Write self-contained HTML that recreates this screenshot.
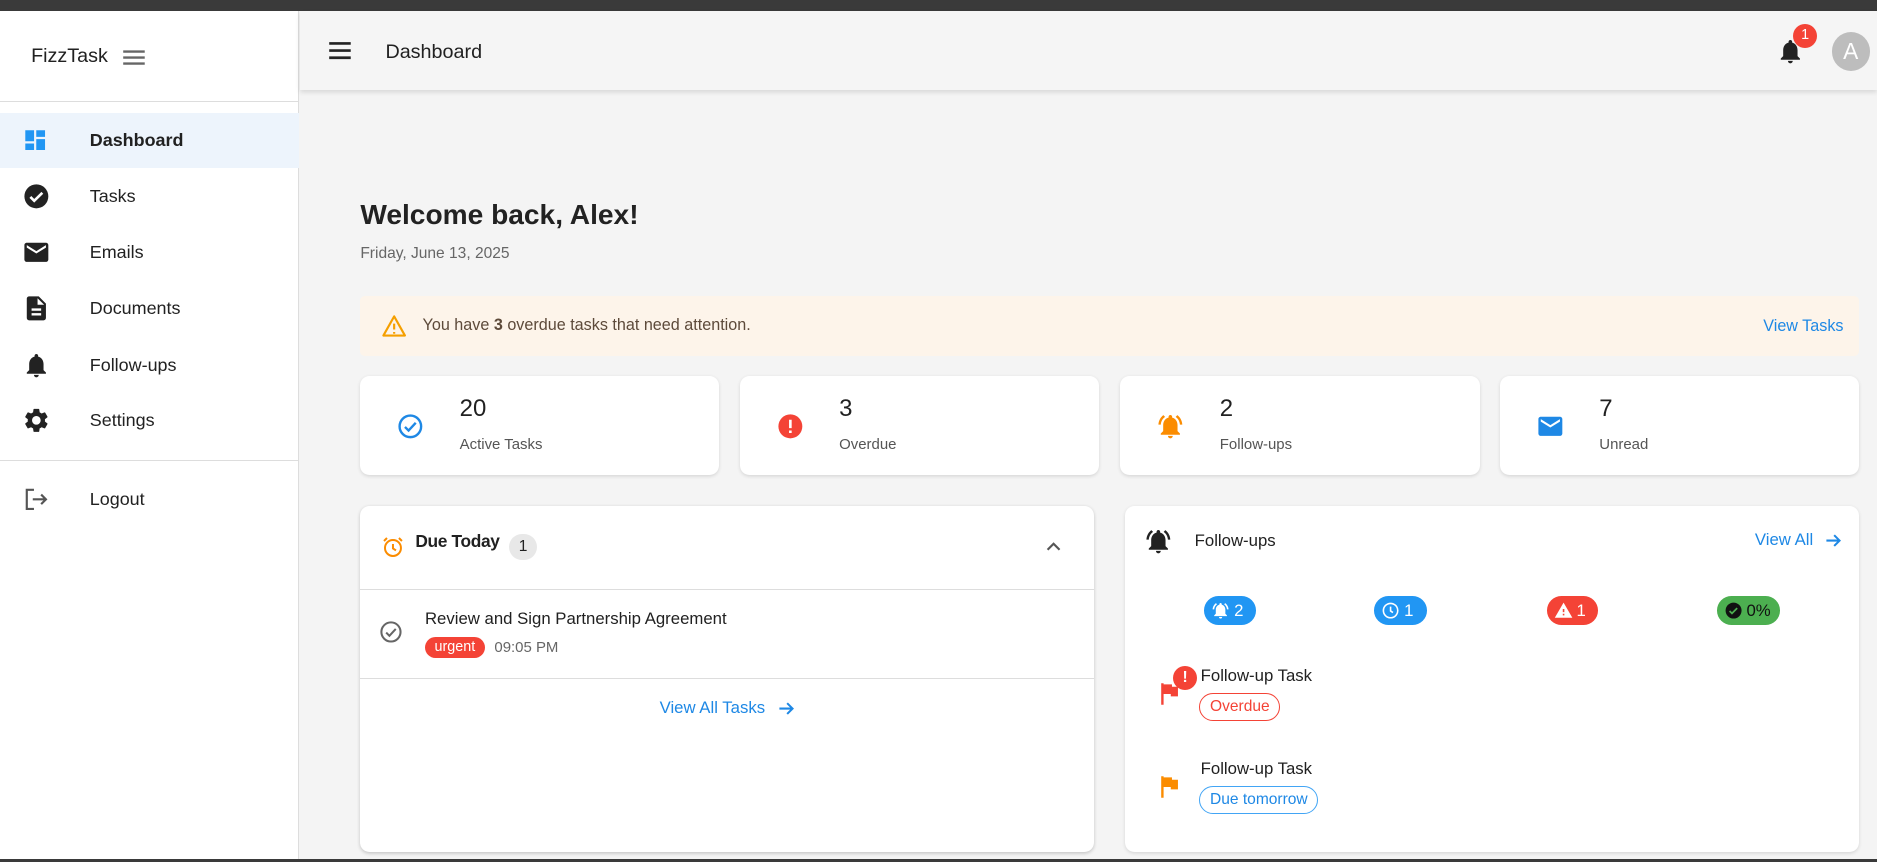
<!DOCTYPE html>
<html><head><meta charset="utf-8"><style>
*{box-sizing:border-box;margin:0;padding:0}
html,body{width:1877px;height:862px;overflow:hidden;background:#f4f4f4}
#w{position:relative;width:1568px;height:720px;zoom:1.19707;font-family:"Liberation Sans",sans-serif;color:#212121;background:#f4f4f4;overflow:hidden}
.abs{position:absolute}
.side{left:0;top:9px;width:250px;height:711px;background:#fff;border-right:1px solid #ddd}
.nav{position:absolute;left:0;width:250px;height:46px;display:flex;align-items:center;font-size:15px}
.nav svg{position:absolute;left:18px}
.nav span{position:absolute;left:75px}
.card{position:absolute;background:#fff;border-radius:8px;box-shadow:0 1px 3px rgba(0,0,0,.12)}
.stat .n{position:absolute;left:83px;top:16px;font-size:20px}
.stat .l{position:absolute;left:83px;top:50px;font-size:12.5px;color:#555}
.stat svg{position:absolute;left:30px;top:30px}
.chip{position:absolute;top:498px;height:24px;border-radius:12px;color:#fff;font-size:14px;display:flex;align-items:center;gap:3px;padding:0 6px}
.pill{position:absolute;border-radius:12px;font-size:13px;height:23px;line-height:21px;padding:0 8px}
.blue{color:#1e88e5}
</style></head><body><div id="w">
<div class="abs" style="left:0;top:0;width:1568px;height:9px;background:#3a3a3a"></div>
<div class="abs side">
 <div class="abs" style="left:26px;top:29px;font-size:16.5px">FizzTask</div>
 <svg class="abs" style="left:102px;top:31px" width="20" height="16" viewBox="0 0 20 16"><path d="M1 3h18M1 8h18M1 13h18" stroke="#666" stroke-width="2"/></svg>
 <div class="abs" style="left:0;top:75px;width:250px;height:1px;background:#ddd"></div>
 <div class="nav" style="top:85px;background:#edf4fc;font-weight:bold"><svg width="22" height="22" viewBox="0 0 24 24"><path fill="#2196f3" d="M3 13h8V3H3v10zm0 8h8v-6H3v6zm10 0h8V11h-8v10zm0-18v6h8V3h-8z"/></svg><span>Dashboard</span></div>
 <div class="nav" style="top:132px"><svg width="24" height="24" viewBox="0 0 24 24"><circle cx="12" cy="12" r="10" fill="#222"/><path d="M7 12.5l3.2 3.2L17 9" stroke="#fff" stroke-width="2.2" fill="none"/></svg><span>Tasks</span></div>
 <div class="nav" style="top:179px"><svg width="24" height="24" viewBox="0 0 24 24"><path fill="#222" d="M20 4H4c-1.1 0-2 .9-2 2v12c0 1.1.9 2 2 2h16c1.1 0 2-.9 2-2V6c0-1.1-.9-2-2-2zm0 4l-8 5-8-5V6l8 5 8-5v2z"/></svg><span>Emails</span></div>
 <div class="nav" style="top:226px"><svg width="24" height="24" viewBox="0 0 24 24"><path fill="#222" d="M14 2H6c-1.1 0-2 .9-2 2v16c0 1.1.9 2 2 2h12c1.1 0 2-.9 2-2V8l-6-6zm2 16H8v-2h8v2zm0-4H8v-2h8v2zm-3-5V3.5L18.5 9H13z"/></svg><span>Documents</span></div>
 <div class="nav" style="top:273px"><svg width="24" height="24" viewBox="0 0 24 24"><path fill="#222" d="M12 22c1.1 0 2-.9 2-2h-4c0 1.1.9 2 2 2zm6-6v-5c0-3.07-1.64-5.64-4.5-6.32V4c0-.83-.67-1.5-1.5-1.5s-1.5.67-1.5 1.5v.68C7.630 5.36 6 7.92 6 11v5l-2 2v1h16v-1l-2-2z"/></svg><span>Follow-ups</span></div>
 <div class="nav" style="top:319px"><svg width="24" height="24" viewBox="0 0 24 24"><path fill="#222" d="M19.14 12.94c.04-.3.06-.61.06-.94 0-.32-.02-.64-.07-.94l2.03-1.58a.49.49 0 00.12-.61l-1.92-3.32a.488.488 0 00-.59-.22l-2.39.96c-.5-.38-1.03-.7-1.62-.94l-.36-2.54a.484.484 0 00-.48-.41h-3.84c-.24 0-.43.17-.47.41l-.36 2.54c-.59.24-1.13.57-1.62.94l-2.39-.96c-.22-.08-.47 0-.59.22L2.74 8.87c-.12.21-.08.47.12.61l2.03 1.58c-.05.3-.09.63-.09.94s.02.64.07.94l-2.03 1.58a.49.49 0 00-.12.61l1.92 3.32c.12.22.37.29.59.22l2.39-.96c.5.38 1.03.7 1.62.94l.36 2.54c.05.24.24.41.48.41h3.84c.24 0 .44-.17.47-.41l.36-2.54c.59-.24 1.13-.56 1.62-.94l2.39.96c.22.08.47 0 .59-.22l1.92-3.32c.12-.22.07-.47-.12-.61l-2.01-1.58zM12 15.6c-1.98 0-3.6-1.62-3.6-3.6s1.62-3.6 3.6-3.6 3.6 1.62 3.6 3.6-1.62 3.6-3.6 3.6z"/></svg><span>Settings</span></div>
 <div class="abs" style="left:0;top:375px;width:250px;height:1px;background:#ddd"></div>
 <div class="nav" style="top:385px"><svg width="24" height="24" viewBox="0 0 24 24"><path d="M10 4H4v16h6M9 12h11M16 8l4 4-4 4" stroke="#555" stroke-width="1.8" fill="none"/></svg><span>Logout</span></div>
</div>
<div class="abs" style="left:251px;top:9px;width:1317px;height:66px;background:#f5f5f5;box-shadow:0 2px 4px rgba(0,0,0,.12)">
 <svg class="abs" style="left:23px;top:25px" width="20" height="16" viewBox="0 0 20 16"><path d="M1 2h18M1 8h18M1 14h18" stroke="#222" stroke-width="2.2"/></svg>
 <div class="abs" style="left:71px;top:25px;font-size:16.5px">Dashboard</div>
 <svg class="abs" style="left:1233px;top:22px" width="24" height="24" viewBox="0 0 24 24"><path fill="#222" d="M12 22c1.1 0 2-.9 2-2h-4c0 1.1.9 2 2 2zm6-6v-5c0-3.07-1.64-5.64-4.5-6.32V4c0-.83-.67-1.5-1.5-1.5s-1.5.67-1.5 1.5v.68C7.63 5.36 6 7.92 6 11v5l-2 2v1h16v-1l-2-2z"/></svg>
 <div class="abs" style="left:1247px;top:11px;width:20px;height:20px;border-radius:50%;background:#f44336;color:#fff;font-size:12px;text-align:center;line-height:20px">1</div>
 <div class="abs" style="left:1279px;top:18px;width:32px;height:32px;border-radius:50%;background:#bdbdbd;color:#fff;font-size:19px;text-align:center;line-height:32px">A</div>
</div>
<div class="abs" style="left:301px;top:166px;font-size:23.5px;font-weight:bold;color:#222">Welcome back, Alex!</div>
<div class="abs" style="left:301px;top:205px;font-size:13px;color:#666">Friday, June 13, 2025</div>
<div class="abs" style="left:301px;top:247px;width:1252px;height:50px;background:#fdf4ea;border-radius:4px">
 <svg class="abs" style="left:17px;top:15px" width="22" height="20" viewBox="0 0 22 20"><path d="M11 2L2 18h18z" stroke="#f59f00" stroke-width="1.8" fill="none" stroke-linejoin="round"/><path d="M11 8v5M11 15v1.5" stroke="#f59f00" stroke-width="1.8"/></svg>
 <div class="abs" style="left:52px;top:17px;font-size:13.5px;color:#5d4a3a">You have <b>3</b> overdue tasks that need attention.</div>
 <div class="abs blue" style="right:13px;top:18px;font-size:13.5px">View Tasks</div>
</div>
<div class="card stat" style="left:301px;top:314px;width:300px;height:83px"><svg width="24" height="24" viewBox="0 0 24 24"><circle cx="12" cy="12" r="9" stroke="#1e88e5" stroke-width="2" fill="none"/><path d="M7.5 12.5l3 3 6-6.5" stroke="#1e88e5" stroke-width="2" fill="none"/></svg><div class="n">20</div><div class="l">Active Tasks</div></div>
<div class="card stat" style="left:618px;top:314px;width:300px;height:83px"><svg width="24" height="24" viewBox="0 0 24 24"><circle cx="12" cy="12" r="10" fill="#f44336"/><path d="M12 6.5v7M12 15.5v2" stroke="#fff" stroke-width="2.2"/></svg><div class="n">3</div><div class="l">Overdue</div></div>
<div class="card stat" style="left:936px;top:314px;width:300px;height:83px"><svg width="24" height="24" viewBox="0 0 24 24"><path fill="#fb8c00" d="M7.58 4.08L6.15 2.65C3.75 4.48 2.17 7.3 2.03 10.5h2c.15-2.65 1.51-4.97 3.55-6.42zm12.39 6.42h2c-.15-3.2-1.73-6.02-4.12-7.85l-1.42 1.43c2.02 1.45 3.39 3.77 3.54 6.42zM18 11c0-3.07-1.64-5.64-4.5-6.32V4c0-.83-.67-1.5-1.5-1.5s-1.5.67-1.5 1.5v.68C7.63 5.36 6 7.92 6 11v5l-2 2v1h16v-1l-2-2v-5zm-6 11c.14 0 .27-.01.4-.04.65-.14 1.18-.58 1.44-1.18.1-.24.15-.5.15-.78h-4c.01 1.1.9 2 2.01 2z"/></svg><div class="n">2</div><div class="l">Follow-ups</div></div>
<div class="card stat" style="left:1253px;top:314px;width:300px;height:83px"><svg width="24" height="24" viewBox="0 0 24 24"><path fill="#1e88e5" d="M20 4H4c-1.1 0-2 .9-2 2v12c0 1.1.9 2 2 2h16c1.1 0 2-.9 2-2V6c0-1.1-.9-2-2-2zm0 4l-8 5-8-5V6l8 5 8-5v2z"/></svg><div class="n">7</div><div class="l">Unread</div></div>
<div class="card" style="left:301px;top:423px;width:613px;height:289px;box-shadow:0 1px 3px rgba(0,0,0,.2)">
 <svg class="abs" style="left:17px;top:24px" width="20" height="20" viewBox="0 0 24 24"><circle cx="12" cy="13" r="8" stroke="#fb8c00" stroke-width="2" fill="none"/><path d="M12 9v4.5l3 2M3 6l3-3M21 6l-3-3" stroke="#fb8c00" stroke-width="2" fill="none"/></svg>
 <div class="abs" style="left:46px;top:21px;font-size:14.5px;font-weight:bold;letter-spacing:-.3px">Due Today</div>
 <div class="abs" style="left:124px;top:23px;width:24px;height:22px;border-radius:11px;background:#e8e8e8;font-size:13px;text-align:center;line-height:22px">1</div>
 <svg class="abs" style="left:571px;top:27px" width="16" height="12" viewBox="0 0 16 12"><path d="M3 9l5-5 5 5" stroke="#555" stroke-width="1.8" fill="none"/></svg>
 <div class="abs" style="left:0;top:69px;width:613px;height:1px;background:#ddd"></div>
 <svg class="abs" style="left:16px;top:95px" width="20" height="20" viewBox="0 0 20 20"><circle cx="10" cy="10" r="8" stroke="#666" stroke-width="1.7" fill="none"/><path d="M6 10.5l2.7 2.7L14 7.5" stroke="#666" stroke-width="1.7" fill="none"/></svg>
 <div class="abs" style="left:54px;top:86px;font-size:14px">Review and Sign Partnership Agreement</div>
 <div class="abs" style="left:54px;top:109px;width:50px;height:18px;border-radius:9px;background:#f44336;color:#fff;font-size:12px;text-align:center;line-height:18px">urgent</div>
 <div class="abs" style="left:112px;top:111px;font-size:12.5px;color:#666">09:05 PM</div>
 <div class="abs" style="left:0;top:143px;width:613px;height:1px;background:#ddd"></div>
 <div class="abs blue" style="left:250px;top:160px;font-size:14px">View All Tasks</div>
 <svg class="abs" style="left:348px;top:161px" width="16" height="16" viewBox="0 0 16 16"><path d="M2 8h11M8.5 3.5L13 8l-4.5 4.5" stroke="#1e88e5" stroke-width="1.7" fill="none"/></svg>
</div>
<div class="card" style="left:940px;top:423px;width:613px;height:289px">
 <svg class="abs" style="left:16px;top:17px" width="24" height="24" viewBox="0 0 24 24"><path fill="#222" d="M7.58 4.08L6.15 2.65C3.75 4.48 2.17 7.3 2.03 10.5h2c.15-2.65 1.51-4.97 3.55-6.42zm12.39 6.42h2c-.15-3.2-1.73-6.02-4.12-7.85l-1.42 1.43c2.02 1.45 3.39 3.77 3.54 6.42zM18 11c0-3.07-1.64-5.64-4.5-6.32V4c0-.83-.67-1.5-1.5-1.5s-1.5.67-1.5 1.5v.68C7.63 5.36 6 7.92 6 11v5l-2 2v1h16v-1l-2-2v-5zm-6 11c.14 0 .27-.01.4-.04.65-.14 1.18-.58 1.44-1.18.1-.24.15-.5.15-.78h-4c.01 1.1.9 2 2.01 2z"/></svg>
 <div class="abs" style="left:58px;top:21px;font-size:14px">Follow-ups</div>
 <div class="abs blue" style="left:526px;top:20px;font-size:14px">View All</div>
 <svg class="abs" style="left:584px;top:21px" width="16" height="16" viewBox="0 0 16 16"><path d="M2 8h11M8.5 3.5L13 8l-4.5 4.5" stroke="#1e88e5" stroke-width="1.7" fill="none"/></svg>
</div>
<div class="chip" style="left:1006px;width:43px;background:#2196f3"><svg width="16" height="16" viewBox="0 0 24 24"><path fill="#fff" d="M7.58 4.08L6.15 2.65C3.75 4.48 2.17 7.3 2.03 10.5h2c.15-2.65 1.51-4.97 3.55-6.42zm12.39 6.42h2c-.15-3.2-1.73-6.02-4.12-7.85l-1.42 1.43c2.02 1.45 3.39 3.77 3.54 6.42zM18 11c0-3.07-1.64-5.64-4.5-6.32V4c0-.83-.67-1.5-1.5-1.5s-1.5.67-1.5 1.5v.68C7.63 5.36 6 7.92 6 11v5l-2 2v1h16v-1l-2-2v-5zm-6 11c1.1 0 2-.9 2-2h-4c0 1.1.9 2 2 2z"/></svg>2</div>
<div class="chip" style="left:1148px;width:44px;background:#2196f3"><svg width="16" height="16" viewBox="0 0 24 24"><circle cx="12" cy="12" r="9" stroke="#fff" stroke-width="2" fill="none"/><path d="M12 7v5.5l3 2" stroke="#fff" stroke-width="2" fill="none"/></svg>1</div>
<div class="chip" style="left:1292px;width:43px;background:#f44336"><svg width="16" height="16" viewBox="0 0 24 24"><path fill="#fff" d="M1 21h22L12 2 1 21zm12-3h-2v-2h2v2zm0-4h-2v-4h2v4z"/></svg>1</div>
<div class="chip" style="left:1434px;width:53px;background:#4caf50;color:#111"><svg width="16" height="16" viewBox="0 0 24 24"><circle cx="12" cy="12" r="10" fill="#111"/><path d="M7 12.5l3 3 6.5-6.5" stroke="#4caf50" stroke-width="2.2" fill="none"/></svg>0%</div>
<svg class="abs" style="left:969px;top:570px" width="18" height="20" viewBox="0 0 18 20"><path fill="#f44336" d="M1 1h2v18H1zM3 2h7v2h5v8H9v-2H3z"/></svg>
<div class="abs" style="left:980px;top:556px;width:20px;height:20px;border-radius:50%;background:#f44336;color:#fff;font-size:13px;font-weight:bold;text-align:center;line-height:20px">!</div>
<div class="abs" style="left:1003px;top:556px;font-size:14px">Follow-up Task</div>
<div class="pill" style="left:1002px;top:579px;border:1px solid #f44336;color:#f44336">Overdue</div>
<svg class="abs" style="left:969px;top:647px" width="18" height="20" viewBox="0 0 18 20"><path fill="#fb8c00" d="M1 1h2v18H1zM3 2h7v2h5v8H9v-2H3z"/></svg>
<div class="abs" style="left:1003px;top:634px;font-size:14px">Follow-up Task</div>
<div class="pill" style="left:1002px;top:657px;border:1px solid #42a5f5;color:#1e88e5">Due tomorrow</div>
<div class="abs" style="left:0;top:718px;width:1568px;height:2px;background:#3a3a3a"></div>
</div></body></html>
